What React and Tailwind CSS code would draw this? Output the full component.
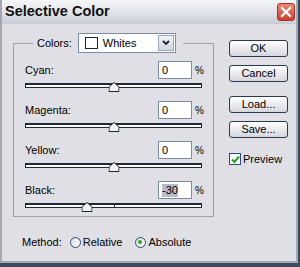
import React from "react";

const rows = [
  { label: "Cyan:", value: 0 },
  { label: "Magenta:", value: 0 },
  { label: "Yellow:", value: 0 },
  { label: "Black:", value: -30, selected: true },
];

function Slider({ value }) {
  const pos = ((value + 100) / 200) * 100;
  return (
    <div className="relative mt-[4px] h-[5px] border border-t-2 border-[#1f2838] bg-white">
      {value !== 0 && <div className="absolute left-1/2 top-0 h-full w-px bg-[#1f2838]" />}
      <svg
        width="11"
        height="10"
        viewBox="0 0 11 10"
        className="absolute top-[-3px] -translate-x-1/2"
        style={{ left: `${pos}%` }}
      >
        <path d="M5.5 0.5 L10.5 5 L10.5 9.5 L0.5 9.5 L0.5 5 Z" fill="#f4f4f4" stroke="#1b2432" />
      </svg>
    </div>
  );
}

function Btn({ children }) {
  return (
    <button className="flex h-[17px] w-[59px] items-center justify-center rounded-[3px] border border-[#2a3a52] bg-gradient-to-b from-white to-[#d6d6de] text-[11px] leading-none text-black">
      {children}
    </button>
  );
}

function Radio({ checked }) {
  return (
    <span className="flex h-[11px] w-[11px] items-center justify-center rounded-full border border-[#2b4a78] bg-gradient-to-br from-[#dcdce2] to-white">
      {checked && <span className="h-[4px] w-[4px] rounded-full bg-[#2aa62a]" />}
    </span>
  );
}

export default function App() {
  return (
    <div className="h-[267px] w-[300px] overflow-hidden bg-[#3d4b60] font-['Liberation_Sans',Arial,sans-serif] text-black">
      <div className="flex h-[263px] w-[298px] flex-col border-x-2 border-b-2 border-[#a4a6b2] bg-[#dfdfe5]">
        {/* title bar */}
        <div className="flex h-[24px] items-center justify-between bg-gradient-to-b from-[#f6f6f9] via-[#e2e3ea] to-[#c9cbd7] pl-[3px] pr-[1px]">
          <span className="text-[14.5px] font-bold text-[#111]">Selective Color</span>
          <span className="flex h-[18px] w-[18px] items-center justify-center rounded-[3px] border border-[#a8332a] bg-gradient-to-b from-[#e88a78] to-[#c8402e]">
            <svg width="12" height="12" viewBox="0 0 12 12">
              <path d="M2 2 L10 10 M10 2 L2 10" stroke="white" strokeWidth="2.2" strokeLinecap="square" />
            </svg>
          </span>
        </div>

        <div className="flex flex-1">
          {/* left column */}
          <div className="ml-[11px] mt-[9px] flex flex-col">
            <fieldset className="w-[201px] border border-[#a2a2aa] px-[11px] pb-[8px]">
              <legend className="ml-[8px] flex items-center px-[4px] pr-[7px]">
                <span className="text-[11px]">Colors:</span>
                <div className="ml-[6px] flex h-[20px] w-[98px] items-center border border-[#7d8ca5] bg-white">
                  <span className="ml-[6px] h-[12px] w-[13px] border border-[#222] bg-white" />
                  <span className="ml-[5px] flex-1 text-[11px]">Whites</span>
                  <span className="mr-px flex h-[16px] w-[16px] items-center justify-center border border-[#9aa6bc] bg-gradient-to-b from-[#f2f3f8] to-[#d2d5e2]">
                    <svg width="8" height="6" viewBox="0 0 8 6">
                      <path d="M1 1 L4 4 L7 1" fill="none" stroke="#1b2432" strokeWidth="1.8" />
                    </svg>
                  </span>
                </div>
              </legend>
              <div className="mt-[8px] flex flex-col gap-[13px]">
                {rows.map((r) => (
                  <div key={r.label} className="flex flex-col">
                    <div className="flex h-[18px] items-center">
                      <span className="flex-1 text-[11px]">{r.label}</span>
                      <div className="flex h-[18px] w-[34px] items-center border border-[#7d8ca5] bg-white pl-[3px] text-[11px]">
                        {r.selected ? <span className="bg-[#b8bccb] leading-[13px]">{r.value}</span> : r.value}
                      </div>
                      <span className="ml-[3px] w-[7px] text-[10px]">%</span>
                    </div>
                    <Slider value={r.value} />
                  </div>
                ))}
              </div>
            </fieldset>
            <div className="ml-[9px] mt-[17px] flex items-center text-[11px]">
              <span>Method:</span>
              <span className="ml-[8px]"><Radio /></span>
              <span className="ml-[2px]">Relative</span>
              <span className="ml-[12px]"><Radio checked /></span>
              <span className="ml-[3px]">Absolute</span>
            </div>
          </div>

          {/* right column */}
          <div className="ml-[15px] mt-[16px] flex flex-col">
            <Btn>OK</Btn>
            <div className="mt-[8px]"><Btn>Cancel</Btn></div>
            <div className="mt-[14px]"><Btn>Load...</Btn></div>
            <div className="mt-[8px]"><Btn>Save...</Btn></div>
            <div className="mt-[13px] flex items-center text-[11px]">
              <span className="flex h-[12px] w-[12px] items-center justify-center border border-[#2b4a78] bg-white">
                <svg width="9" height="9" viewBox="0 0 9 9">
                  <path d="M1 4.5 L3.5 7 L8 1.5" fill="none" stroke="#21a121" strokeWidth="2" />
                </svg>
              </span>
              <span className="ml-[2px]">Preview</span>
            </div>
          </div>
        </div>
      </div>
    </div>
  );
}
